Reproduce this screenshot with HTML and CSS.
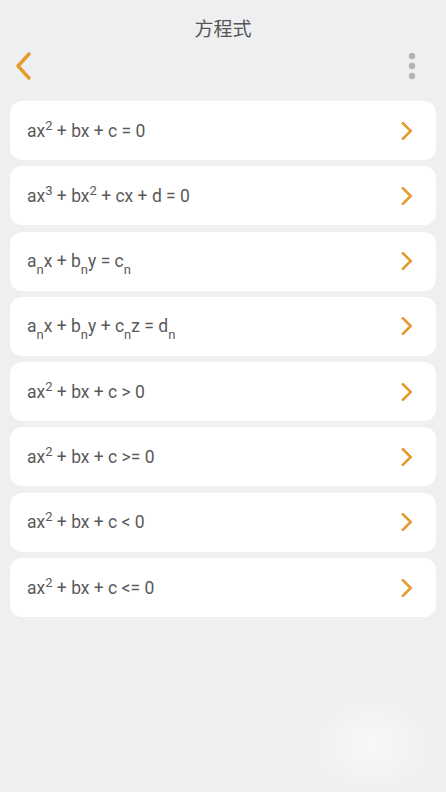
FILE: index.html
```html
<!DOCTYPE html>
<html lang="zh">
<head>
  <meta charset="UTF-8" />
  <meta name="viewport" content="width=device-width, initial-scale=1.0" />
  <title>方程式</title>
  <link rel="stylesheet" href="styles.css">
</head>
<body>
  <div class="header">
    <div class="title">方程式</div>
    <div class="toolbar">
      <svg class="back" width="20" height="30" viewBox="0 0 20 30">
        <path d="M16 3 L5 15 L16 27" fill="none" stroke="#e69a2c" stroke-width="3.4" stroke-linecap="round" stroke-linejoin="round"/>
      </svg>
      <svg class="more" width="10" height="28" viewBox="0 0 10 28">
        <circle cx="5" cy="4" r="3.2" fill="#b3b3b3"/>
        <circle cx="5" cy="14" r="3.2" fill="#b3b3b3"/>
        <circle cx="5" cy="24" r="3.2" fill="#b3b3b3"/>
      </svg>
    </div>
  </div>
  <div class="list">
    <div class="item"><span class="eq">ax<sup>2</sup> + bx + c = 0</span><span class="go"></span></div>
    <div class="item"><span class="eq">ax<sup>3</sup> + bx<sup>2</sup> + cx + d = 0</span><span class="go"></span></div>
    <div class="item"><span class="eq">a<sub>n</sub>x + b<sub>n</sub>y = c<sub>n</sub></span><span class="go"></span></div>
    <div class="item"><span class="eq">a<sub>n</sub>x + b<sub>n</sub>y + c<sub>n</sub>z = d<sub>n</sub></span><span class="go"></span></div>
    <div class="item"><span class="eq">ax<sup>2</sup> + bx + c &gt; 0</span><span class="go"></span></div>
    <div class="item"><span class="eq">ax<sup>2</sup> + bx + c &gt;= 0</span><span class="go"></span></div>
    <div class="item"><span class="eq">ax<sup>2</sup> + bx + c &lt; 0</span><span class="go"></span></div>
    <div class="item"><span class="eq">ax<sup>2</sup> + bx + c &lt;= 0</span><span class="go"></span></div>
  </div>
</body>
</html>
```

FILE: styles.css
```css
body {
  margin: 0;
  height: 792px;
  font-family: Roboto, "Noto Sans CJK SC", sans-serif;
  background: radial-gradient(ellipse 70px 55px at 372px 745px, #f8f8f9, #eeeff1);
  background-color: #eeeff1;
}
.header {
  padding-top: 18px;
  height: 83px;
}
.title {
  text-align: center;
  font-size: 19px;
  line-height: 24px;
  color: #555;
}
.toolbar {
  display: flex;
  justify-content: space-between;
  align-items: center;
  margin-top: 10px;
  height: 28px;
  padding: 0 29px 0 13px;
}
.more { display: block; }
.list {
  display: flex;
  flex-direction: column;
  gap: 6.3px;
  padding: 0 10px;
}
.item {
  height: 59px;
  background: #fff;
  border-radius: 12px;
  display: flex;
  align-items: center;
  justify-content: space-between;
  padding: 0 26px 0 17px;
}
.eq {
  font-size: 17.5px;
  color: #595959;
  line-height: 24px;
}
.eq sup {
  font-size: 13px;
  vertical-align: 7px;
  line-height: 0;
}
.eq sub {
  font-size: 13px;
  vertical-align: -7px;
  line-height: 0;
}
.go {
  width: 11px;
  height: 11px;
  border-top: 3.5px solid #e69a2c;
  border-right: 3.5px solid #e69a2c;
  transform: rotate(45deg);
  border-radius: 1px;
}
```
